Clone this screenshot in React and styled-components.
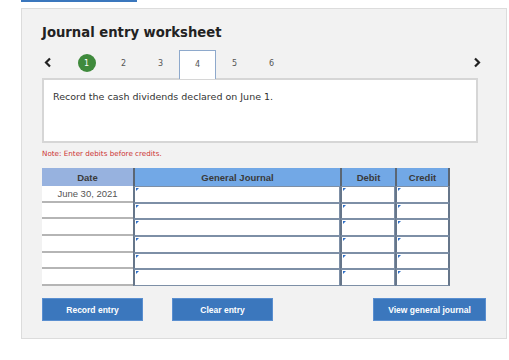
import React from 'react';
import styled, { createGlobalStyle } from 'styled-components';

const GlobalStyle = createGlobalStyle`
  body {
    margin: 0;
    background: #ffffff;
    font-family: "DejaVu Sans", Verdana, sans-serif;
  }
`;

const TopBar = styled.div`
  width: 116px;
  height: 2px;
  margin-left: 21px;
  background: #3b77bd;
`;

const Panel = styled.div`
  margin: 6px 0 0 21px;
  width: 444px;
  padding: 15px 20px 17px 20px;
  background: #f2f2f2;
  border: 1px solid #dcdcdc;
`;

const Title = styled.h1`
  margin: 0;
  font-size: 13.2px;
  font-weight: bold;
  color: #222;
  line-height: 17px;
`;

const Nav = styled.div`
  display: flex;
  align-items: center;
  height: 28px;
  margin-top: 9px;
  width: 444px;
`;

const Arrow = styled.div`
  width: ${(p) => p.$w}px;
  display: flex;
  align-items: center;
  padding-left: ${(p) => p.$pad || 0}px;
  padding-bottom: 3px;
  box-sizing: border-box;
  margin-left: ${(p) => (p.$right ? 'auto' : '0')};
  margin-right: ${(p) => (p.$right ? '3px' : '0')};
`;

const Step = styled.div`
  width: 37px;
  height: 28px;
  display: flex;
  align-items: center;
  justify-content: center;
  padding-bottom: 2px;
  font-size: 8px;
  color: #555;
  box-sizing: border-box;
  ${(p) =>
    p.$active &&
    `
    background: #fff;
    border: 1px solid #8ea9cc;
    border-bottom: none;
    height: 29px;
    margin-top: 1px;
  `}
`;

const Done = styled.span`
  width: 18px;
  height: 18px;
  border-radius: 50%;
  background: #3f8a3c;
  color: #fff;
  display: flex;
  align-items: center;
  justify-content: center;
  font-size: 8px;
`;

const Prompt = styled.div`
  width: 436px;
  height: 65px;
  box-sizing: border-box;
  background: #fff;
  border: 2px solid #d6d6d6;
  padding: 11px 9px;
  font-size: 9.5px;
  color: #333;
`;

const Note = styled.div`
  margin-top: 6px;
  font-size: 7.2px;
  color: #cc3333;
  line-height: 10px;
`;

const Table = styled.div`
  margin-top: 9px;
  width: 408px;
  display: grid;
  grid-template-columns: 91px 207px 55px 55px;
  font-family: "Liberation Sans", Arial, sans-serif;
`;

const Head = styled.div`
  height: 18px;
  display: flex;
  align-items: center;
  justify-content: center;
  font-size: 9.5px;
  font-weight: bold;
  color: #3a3a3a;
  background: ${(p) => (p.$date ? '#97b2df' : '#72a8e6')};
  border-left: ${(p) => (p.$first ? 'none' : '2px solid #5b6673')};
  border-right: ${(p) => (p.$last ? '2px solid #5b6673' : 'none')};
  box-sizing: border-box;
`;

const DateCell = styled.div`
  height: 16.7px;
  box-sizing: border-box;
  background: #fff;
  border-bottom: 2px solid #b5b5b5;
  display: flex;
  align-items: center;
  justify-content: center;
  font-size: 9.5px;
  color: #555;
`;

const InputCell = styled.div`
  position: relative;
  height: 16.7px;
  box-sizing: border-box;
  background: #fff;
  border: 1px solid #7d8fa6;
  border-left: 2px solid #66768a;
  border-right: ${(p) => (p.$last ? '2px solid #66768a' : '1px solid #7d8fa6')};

  &::before {
    content: '';
    position: absolute;
    top: 1px;
    left: 1px;
    border-top: 3px solid #2f6fc6;
    border-right: 3px solid transparent;
  }
`;

const Actions = styled.div`
  display: flex;
  margin-top: 12px;
  gap: 29px;
`;

const Button = styled.button`
  width: ${(p) => p.$w}px;
  height: 23px;
  margin-left: ${(p) => (p.$push ? 'auto' : '0')};
  background: #3b77bd;
  border: 1px solid #5a8fd0;
  color: #fff;
  font-family: "Liberation Sans", Arial, sans-serif;
  font-weight: bold;
  font-size: 8.5px;
  padding: 0;
`;

const Chevron = ({ dir }) => (
  <svg width="8" height="11" viewBox="0 0 8 11">
    <path
      d={dir === 'left' ? 'M6 1.5 L2 5.5 L6 9.5' : 'M2 1.5 L6 5.5 L2 9.5'}
      fill="none"
      stroke="#222"
      strokeWidth="2.2"
    />
  </svg>
);

const rows = ['June 30, 2021', '', '', '', '', ''];

export default function App() {
  return (
    <>
      <GlobalStyle />
      <TopBar />
      <Panel>
        <Title>Journal entry worksheet</Title>
        <Nav>
          <Arrow $w={26} $pad={2}>
            <Chevron dir="left" />
          </Arrow>
          <Step>
            <Done>1</Done>
          </Step>
          <Step>2</Step>
          <Step>3</Step>
          <Step $active>4</Step>
          <Step>5</Step>
          <Step>6</Step>
          <Arrow $w={10} $right>
            <Chevron dir="right" />
          </Arrow>
        </Nav>
        <Prompt>Record the cash dividends declared on June 1.</Prompt>
        <Note>Note: Enter debits before credits.</Note>
        <Table>
          <Head $date $first>Date</Head>
          <Head>General Journal</Head>
          <Head>Debit</Head>
          <Head $last>Credit</Head>
          {rows.map((d, i) => (
            <React.Fragment key={i}>
              <DateCell>{d}</DateCell>
              <InputCell />
              <InputCell />
              <InputCell $last />
            </React.Fragment>
          ))}
        </Table>
        <Actions>
          <Button $w={101}>Record entry</Button>
          <Button $w={101}>Clear entry</Button>
          <Button $w={113} $push>View general journal</Button>
        </Actions>
      </Panel>
    </>
  );
}
